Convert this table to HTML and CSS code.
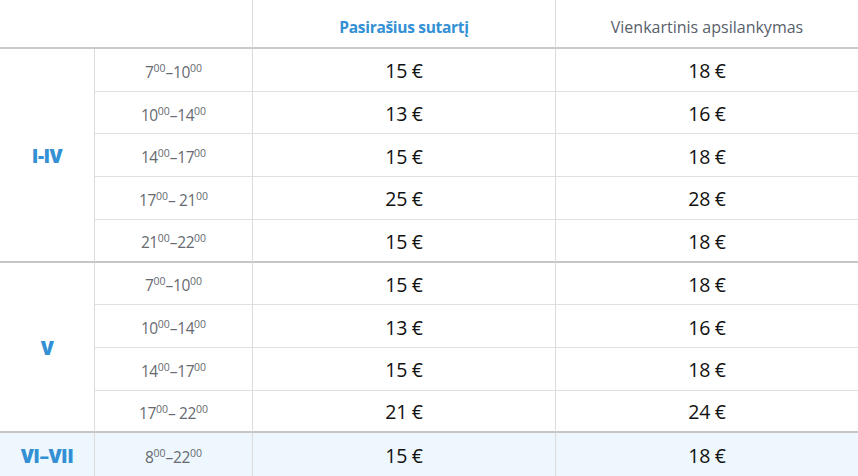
FILE: index.html
```html
<!DOCTYPE html>
<html lang="lt">
<head>
<meta charset="utf-8">
<link rel="stylesheet" href="styles.css">
</head>
<body>
<div class="prices">
  <div class="cell head h-empty"></div>
  <div class="cell head h-contract">Pasirašius sutartį</div>
  <div class="cell head h-single last">Vienkartinis apsilankymas</div>

  <div class="cell day span5 end">I-IV</div>
  <div class="cell time"><span>7<sup>00</sup>–10<sup>00</sup></span></div>
  <div class="cell price">15 €</div>
  <div class="cell price last">18 €</div>
  <div class="cell time"><span>10<sup>00</sup>–14<sup>00</sup></span></div>
  <div class="cell price">13 €</div>
  <div class="cell price last">16 €</div>
  <div class="cell time"><span>14<sup>00</sup>–17<sup>00</sup></span></div>
  <div class="cell price">15 €</div>
  <div class="cell price last">18 €</div>
  <div class="cell time"><span>17<sup>00</sup>– 21<sup>00</sup></span></div>
  <div class="cell price">25 €</div>
  <div class="cell price last">28 €</div>
  <div class="cell time end"><span>21<sup>00</sup>–22<sup>00</sup></span></div>
  <div class="cell price end">15 €</div>
  <div class="cell price last end">18 €</div>

  <div class="cell day span4 end">V</div>
  <div class="cell time"><span>7<sup>00</sup>–10<sup>00</sup></span></div>
  <div class="cell price">15 €</div>
  <div class="cell price last">18 €</div>
  <div class="cell time"><span>10<sup>00</sup>–14<sup>00</sup></span></div>
  <div class="cell price">13 €</div>
  <div class="cell price last">16 €</div>
  <div class="cell time"><span>14<sup>00</sup>–17<sup>00</sup></span></div>
  <div class="cell price">15 €</div>
  <div class="cell price last">18 €</div>
  <div class="cell time end"><span>17<sup>00</sup>– 22<sup>00</sup></span></div>
  <div class="cell price end">21 €</div>
  <div class="cell price last end">24 €</div>

  <div class="cell day wk">VI–VII</div>
  <div class="cell time wk"><span>8<sup>00</sup>–22<sup>00</sup></span></div>
  <div class="cell price wk">15 €</div>
  <div class="cell price last wk">18 €</div>
</div>
</body>
</html>
```
FILE: styles.css
```css
html, body {
  margin: 0;
  padding: 0;
  background: #ffffff;
}
body {
  font-family: "Open Sans", "Noto Sans", "Liberation Sans", sans-serif;
  width: 858px;
  height: 476px;
  overflow: hidden;
}
.prices {
  display: grid;
  grid-template-columns: 95px 158px 303px 302px;
  grid-template-rows: 49px repeat(10, 1fr);
  width: 858px;
  height: 476px;
}
.cell {
  box-sizing: border-box;
  display: flex;
  align-items: center;
  justify-content: center;
  border-right: 1px solid #dcdcdc;
  border-bottom: 1px solid #e0e0e0;
  white-space: nowrap;
}
.cell.last { border-right: 0; }
.cell.end { border-bottom: 2px solid #c6c6c6; }

.head {
  border-bottom: 2px solid #c9c9c9;
  font-size: 15.5px;
  padding-top: 6px;
}
.h-empty { grid-column: span 2; }
.h-contract {
  color: #3390d4;
  font-weight: 700;
  letter-spacing: -0.3px;
}
.h-single {
  color: #58606b;
  font-weight: 400;
  font-size: 16px;
}

.day {
  color: #3390d4;
  font-weight: 800;
  font-size: 19px;
  letter-spacing: -0.5px;
  padding-top: 2px;
}
.span5 { grid-row: span 5; }
.span4 { grid-row: span 4; }

.time {
  color: #666a70;
  font-size: 15.5px;
  letter-spacing: -0.4px;
  padding-top: 4px;
}
.time sup {
  font-size: 10.5px;
  line-height: 1;
  vertical-align: 0;
  position: relative;
  top: -6px;
  letter-spacing: 0;
}
.price {
  color: #111111;
  font-size: 19.5px;
  letter-spacing: -0.3px;
  padding-top: 2px;
}
.wk { background: #eef7fd; border-bottom: 0; }
```
